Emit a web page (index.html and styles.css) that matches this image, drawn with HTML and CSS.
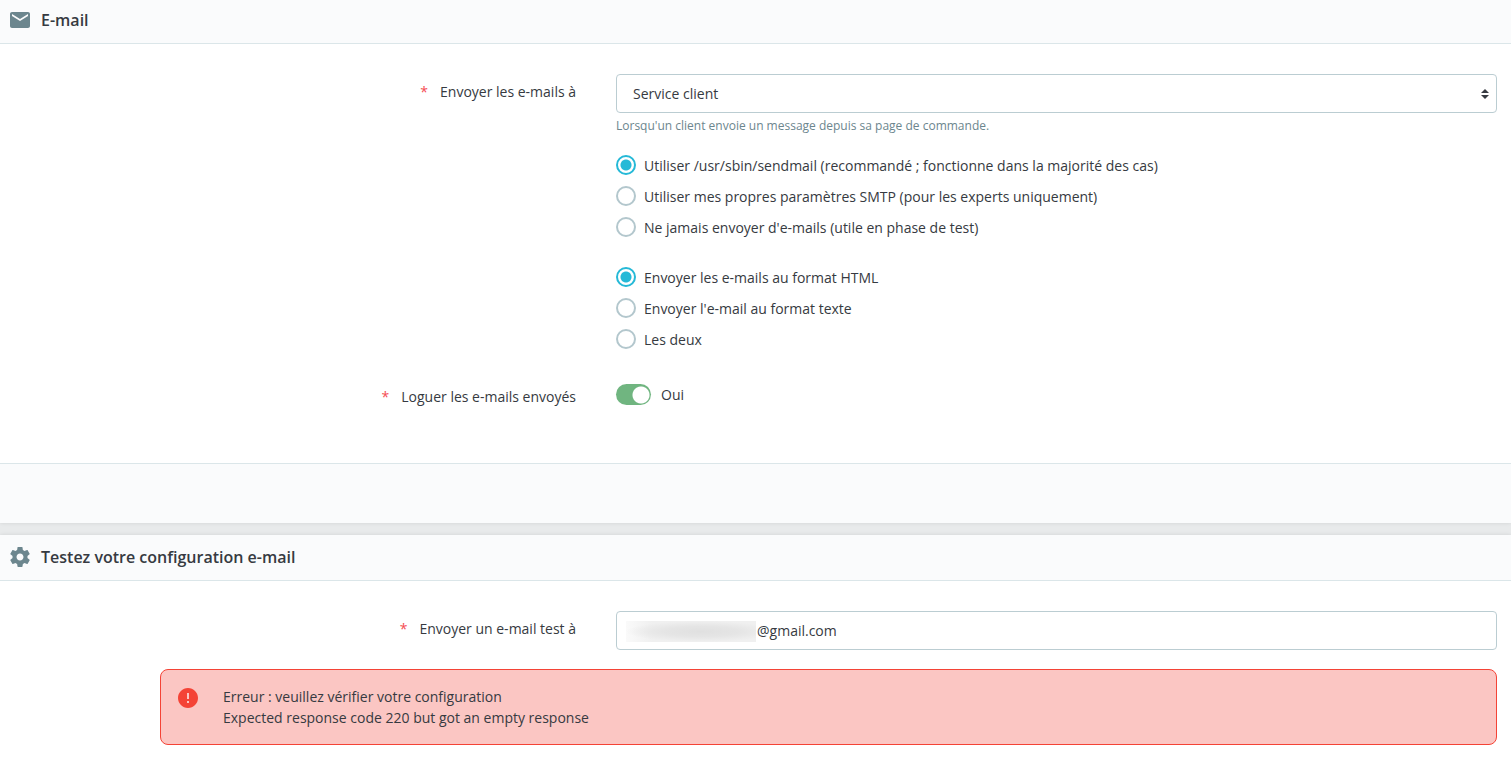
FILE: index.html
```html
<!DOCTYPE html>
<html lang="fr">
<head>
    <meta charset="UTF-8">
    <meta name="viewport" content="width=device-width, initial-scale=1.0">
    <title>E-mail</title>
    <link rel="stylesheet" href="styles.css">
</head>
<body>
    <form class="card">
        <h3 class="card-header">
            <svg class="icon" viewBox="0 0 24 24"><path d="M20 4H4c-1.100 0-1.990.9-1.990 2L2 18c0 1.100.9 2 2 2h16c1.100 0 2-.9 2-2V6c0-1.100-.9-2-2-2zm0 4l-8 5-8-5V6l8 5 8-5v2z"/></svg>
            E-mail
        </h3>
        <div class="card-body">
            <div class="form-row">
                <label class="form-label" for="send_to"><span class="required">*</span>Envoyer les e-mails à</label>
                <div>
                    <div class="select-box">
                        <select class="form-control" id="send_to" name="send_to">
                            <option>Service client</option>
                        </select>
                        <svg class="select-arrow" viewBox="0 0 8 10"><path d="M0 4l4-4 4 4zM0 6l4 4 4-4z"/></svg>
                    </div>
                    <small class="help">Lorsqu'un client envoie un message depuis sa page de commande.</small>
                </div>
            </div>
            <div class="form-row">
                <div class="radio-group">
                    <label class="radio"><input type="radio" name="mail_method" checked>Utiliser /usr/sbin/sendmail (recommandé ; fonctionne dans la majorité des cas)</label>
                    <label class="radio"><input type="radio" name="mail_method">Utiliser mes propres paramètres SMTP (pour les experts uniquement)</label>
                    <label class="radio"><input type="radio" name="mail_method">Ne jamais envoyer d'e-mails (utile en phase de test)</label>
                </div>
            </div>
            <div class="form-row">
                <div class="radio-group">
                    <label class="radio"><input type="radio" name="mail_type" checked>Envoyer les e-mails au format HTML</label>
                    <label class="radio"><input type="radio" name="mail_type">Envoyer l'e-mail au format texte</label>
                    <label class="radio"><input type="radio" name="mail_type">Les deux</label>
                </div>
            </div>
            <div class="form-row">
                <label class="form-label" for="log_emails"><span class="required">*</span>Loguer les e-mails envoyés</label>
                <div class="switch">
                    <input type="checkbox" id="log_emails" name="log_emails" checked>
                    <span>Oui</span>
                </div>
            </div>
        </div>
        <div class="card-footer"></div>
    </form>

    <form class="card card-test">
        <h3 class="card-header">
            <svg class="icon" viewBox="0 0 24 24"><path d="M19.430 12.980c.04-.32.070-.64.070-.98s-.03-.66-.070-.98l2.110-1.650c.19-.15.240-.42.120-.64l-2-3.460c-.12-.22-.39-.3-.61-.22l-2.490 1c-.52-.4-1.080-.73-1.690-.98l-.38-2.650C14.460 2.180 14.250 2 14 2h-4c-.25 0-.46.180-.49.420l-.38 2.650c-.61.250-1.170.590-1.690.980l-2.490-1c-.23-.09-.49 0-.61.220l-2 3.460c-.13.220-.07.490.120.640l2.110 1.650c-.04.320-.07.650-.07.980s.030.660.070.980l-2.110 1.650c-.19.150-.24.420-.12.640l2 3.460c.12.220.39.300.61.220l2.490-1c.52.400 1.080.730 1.690.980l.38 2.650c.03.240.24.420.49.420h4c.25 0 .46-.18.49-.42l.38-2.650c.61-.25 1.170-.59 1.690-.98l2.490 1c.23.090.49 0 .61-.22l2-3.460c.12-.22.070-.49-.12-.64l-2.110-1.650zM12 15.500c-1.930 0-3.500-1.570-3.500-3.500s1.570-3.500 3.500-3.500 3.500 1.570 3.500 3.500-1.570 3.500-3.500 3.500z"/></svg>
            Testez votre configuration e-mail
        </h3>
        <div class="card-body">
            <div class="form-row">
                <label class="form-label" for="test_email"><span class="required">*</span>Envoyer un e-mail test à</label>
                <div class="email-box">
                    <input class="form-control" type="text" id="test_email" name="test_email" value="@gmail.com">
                    <span class="mask"></span>
                </div>
            </div>
            <div class="alert" role="alert">
                <svg class="alert-icon" viewBox="0 0 24 24"><path d="M12 2C6.480 2 2 6.480 2 12s4.480 10 10 10 10-4.480 10-10S17.520 2 12 2zm1 15h-2v-2h2v2zm0-4h-2V7h2v6z"/></svg>
                <div>
                    Erreur : veuillez vérifier votre configuration<br>
                    Expected response code 220 but got an empty response
                </div>
            </div>
        </div>
    </form>
</body>
</html>
```
FILE: styles.css
```css
* {
    box-sizing: border-box;
}

body {
    margin: 0;
    background-color: #e8eaeb;
    color: #363a41;
    font-family: "Open Sans", sans-serif;
    font-size: 14px;
    line-height: 21px;
}

.card {
    background-color: #fff;
    box-shadow: 0 0 4px rgba(0, 0, 0, 0.1);
}

.card-test {
    margin-top: 12px;
}

.card-header {
    display: flex;
    align-items: center;
    gap: 9px;
    margin: 0;
    padding: 8px 8px 11px;
    background-color: #fafbfc;
    border-bottom: 1px solid #dbe6e9;
    font-size: 16px;
    font-weight: 600;
    line-height: 24px;
}

.card-test .card-header {
    padding-top: 10px;
}

.icon {
    width: 24px;
    height: 24px;
    fill: #6c868e;
}

.card-body {
    padding: 30px 14px 35px 0;
}

.card-test .card-body {
    padding-bottom: 28px;
}

.card-footer {
    height: 60px;
    background-color: #fafbfc;
    border-top: 1px solid #dbe6e9;
}

.form-row {
    display: grid;
    grid-template-columns: 17fr 26fr;
    column-gap: 40px;
    margin-bottom: 19px;
}

.form-label {
    padding-top: 7px;
    text-align: right;
}

.required {
    margin-right: 12px;
    color: #f54c53;
}

.form-control {
    display: block;
    width: 100%;
    height: 39px;
    padding: 0 16px;
    background-color: #fff;
    border: 1px solid #bbcdd2;
    border-radius: 4px;
    color: #363a41;
    font: inherit;
    appearance: none;
}

.select-box,
.email-box {
    position: relative;
}

.select-arrow {
    position: absolute;
    top: 15px;
    right: 8px;
    width: 8px;
    height: 10px;
    fill: #363a41;
    pointer-events: none;
}

.email-box .form-control {
    padding-left: 140px;
}

.mask {
    position: absolute;
    top: 10px;
    left: 10px;
    width: 130px;
    height: 21px;
    background: radial-gradient(closest-side, #e0e0e0, #e5e5e5 50%, rgba(240, 240, 240, 0)) 0 0 / 150px 21px, linear-gradient(to right, #fafafa, #f0f0f0 20%);
}

.help {
    display: block;
    padding: 4px 0 1px;
    color: #6c868e;
    font-size: 12px;
    line-height: 18px;
}

.radio-group {
    display: grid;
    grid-column: 2;
    row-gap: 10px;
    padding-bottom: 10px;
}

.radio {
    display: flex;
    align-items: flex-start;
    gap: 8px;
}

.radio input {
    appearance: none;
    width: 20px;
    height: 20px;
    margin: 0;
    border: 2px solid #b3c7cd;
    border-radius: 50%;
    background-color: #fff;
}

.radio input:checked {
    border-color: #25b9d7;
    background: radial-gradient(circle, #25b9d7 5px, #fff 6px);
}

.switch {
    display: flex;
    align-items: center;
    gap: 10px;
    height: 30px;
}

.switch input {
    appearance: none;
    width: 35px;
    height: 21px;
    margin: 0;
    border-radius: 11px;
    background: radial-gradient(circle at 25px 11px, #fff 8px, #70b580 9px);
}

.alert {
    display: flex;
    gap: 23px;
    margin-left: 160px;
    padding: 16px 15px;
    background-color: #fbc6c3;
    border: 1px solid #f44336;
    border-radius: 8px;
}

.alert-icon {
    width: 24px;
    height: 24px;
    fill: #f44336;
}
```
